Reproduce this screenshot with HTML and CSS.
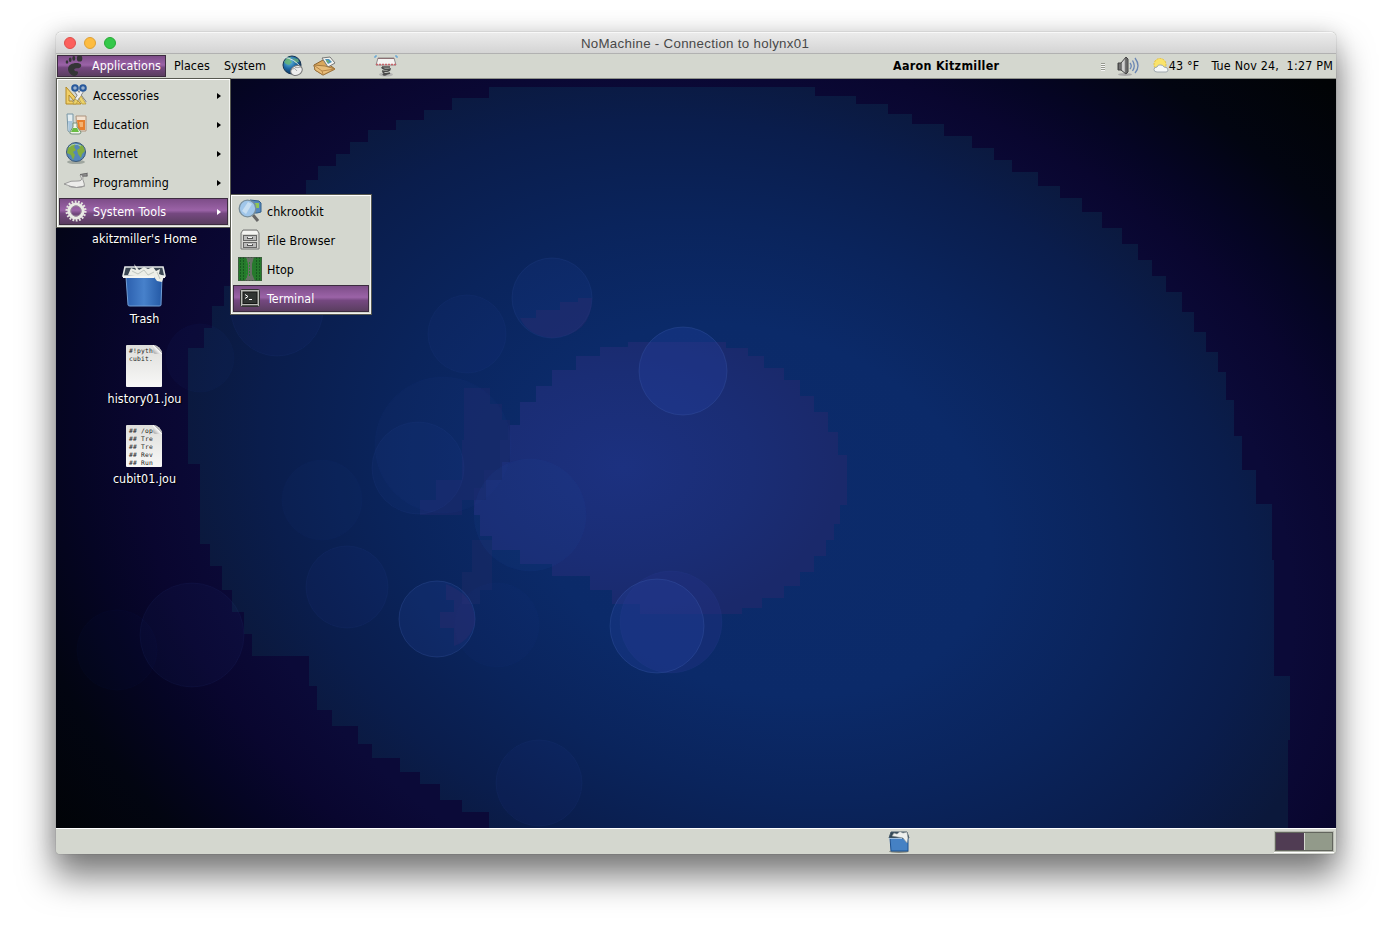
FILE: index.html
```html
<!DOCTYPE html>
<html lang="en">
<head>
<meta charset="utf-8">
<title>NoMachine - Connection to holynx01</title>
<link rel="stylesheet" href="styles.css">
</head>
<body>
<div class="window">
  <header class="titlebar">
    <div class="lights"><span class="light red"></span><span class="light yellow"></span><span class="light green"></span></div>
    <h1 class="title">NoMachine - Connection to holynx01</h1>
  </header>

  <nav class="panel">
    <div class="panel-left">
      <span class="menu-root active">
        <svg class="foot" width="18" height="22" viewBox="0 0 18 22"><g fill="#343536"><ellipse cx="2" cy="7" rx="1.300" ry="1.800"/><ellipse cx="5.200" cy="4.800" rx="1.400" ry="2.200"/><ellipse cx="8.800" cy="3.400" rx="1.500" ry="2.300"/><ellipse cx="14.600" cy="3.400" rx="2.700" ry="3.200"/><path d="M3 14C3 9 10 7 14.500 8.500C18 10 15.500 13.500 12.500 13.300C10 13 8.500 14 9.500 15.500C11 17 13 15.500 13 17.500C13 21 9 22 6.500 20C4 18 3 16 3 14Z"/></g></svg>
        <span>Applications</span>
      </span>
      <span class="menu-root">Places</span>
      <span class="menu-root">System</span>
      <svg class="launch globe" width="22" height="22" viewBox="0 0 22 22"><defs><radialGradient id="gl" cx=".35" cy=".3" r=".8"><stop offset="0" stop-color="#72c8e4"/><stop offset=".5" stop-color="#1c68a4"/><stop offset="1" stop-color="#0b2448"/></radialGradient></defs><circle cx="11" cy="10" r="9" fill="url(#gl)" stroke="#173452"/><path d="M3 7L6 3L10 2L9 5L11 7L8 10L5 9Z" fill="#67b36c" opacity=".8"/><path d="M12 3L17 4L18 7L14 8Z" fill="#69ad77" opacity=".8"/><path d="M1 2Q14 3 20 13" fill="none" stroke="#d3e3e0"/><ellipse cx="15.500" cy="15.500" rx="6" ry="4.700" transform="rotate(-28 15.500 15.500)" fill="#eee" stroke="#777"/><path d="M11 14Q14 12 16 16M14 12.500Q17 13 20 12" fill="none" stroke="#aaa"/></svg>
      <svg class="launch mail" width="24" height="22" viewBox="0 0 24 22"><path d="M1 10L10 5L22 14L10 20L2 15Z" fill="#d9a75c" stroke="#8d6430"/><path d="M9 3L17 2L22 8L15 12Z" fill="#f4f4f0" stroke="#777"/><path d="M12 4L16 4L19 7L15 9Z" fill="#4b92b8"/><path d="M13 6L15 5L16 8Z" fill="#78b757"/><path d="M1 10L12 11L22 14L10 20L2 15Z" fill="#e8bd79" stroke="#966d37" stroke-width=".8"/><path d="M2 11L9 16L22 14M9 16L10 19" fill="none" stroke="#b98647"/></svg>
      <svg class="launch spring" width="24" height="22" viewBox="0 0 24 22"><path d="M4 3H20L22 10H2Z" fill="#f6f4f3" stroke="#918889"/><path d="M2 9.500H22" stroke="#c8646a" stroke-width="1.500" stroke-dasharray="2 1"/><path d="M4 3.500H20" stroke="#8c7073"/><path d="M1 3V1H3M21 1H23V3" fill="none" stroke="#4f9cd7"/><ellipse cx="12" cy="19.500" rx="7" ry="2" fill="#aaa" opacity=".7"/><path d="M8 12H16M8 12Q8 15 16 14Q16 17 8 16M9 17Q10 20 16 18M13 19Q10 21 9 19" fill="none" stroke="#4b4b4b" stroke-width="1.700"/></svg>
    </div>
    <strong class="user">Aaron Kitzmiller</strong>
    <div class="panel-right">
      <span class="grip"><i></i><i></i><i></i><i></i></span>
      <svg class="volume" width="22" height="22" viewBox="0 0 22 22"><defs><linearGradient id="sp"><stop stop-color="#444"/><stop offset=".5" stop-color="#ddd"/><stop offset="1" stop-color="#666"/></linearGradient></defs><ellipse cx="8" cy="19.500" rx="7" ry="1.500" fill="#aaa"/><path d="M1 8H4L9 2L11 4V17L9 19L4 15H1Z" fill="url(#sp)" stroke="#444"/><path d="M4 8V15M9 3V18" stroke="#444"/><g fill="none" stroke="#6a86b4" stroke-width="1.300"><path d="M13 8Q15.500 11 13 14"/><path d="M15.500 5.500Q19 11 15.500 16"/><path d="M18 3Q24 11 18 18"/></g></svg>
      <svg class="weather" width="16" height="16" viewBox="0 0 16 16"><circle cx="7" cy="6.500" r="6" fill="#fae36b" stroke="#e8c137" stroke-dasharray="2 1"/><path d="M4 14Q1 14 1 11.500Q1 9 4 9Q5 6 8 7Q10 7 11 9Q15 9 15 12Q15 14 13 14Z" fill="#f6f8f8" stroke="#a0a9b0"/></svg>
      <span class="temp">43 °F</span>
      <span class="clock">Tue Nov 24,&nbsp; 1:27 PM</span>
    </div>
  </nav>

  <main class="desktop">
    <svg class="wallpaper" width="1280" height="749" viewBox="56 79 1280 749">
      <defs>
        <radialGradient id="night" gradientUnits="userSpaceOnUse" cx="0" cy="0" r="1.600" gradientTransform="translate(756 529) rotate(20) scale(576 423)">
          <stop offset=".6" stop-color="#0b0a38"/><stop offset=".69" stop-color="#09062f"/><stop offset=".76" stop-color="#050524"/><stop offset=".86" stop-color="#020511"/><stop offset="1" stop-color="#010305"/>
        </radialGradient>
        <radialGradient id="sky" gradientUnits="userSpaceOnUse" cx="0" cy="0" r="1.050" gradientTransform="translate(756 510) rotate(20) scale(576 423)">
          <stop offset="0" stop-color="#0c2b6b"/><stop offset=".4" stop-color="#0b2a69"/><stop offset=".62" stop-color="#0a245c"/><stop offset=".84" stop-color="#0a1d4c"/><stop offset="1" stop-color="#0b183b"/>
        </radialGradient>
        <radialGradient id="core" cx=".4" cy=".46" r=".58"><stop offset="0" stop-color="#1c3180"/><stop offset=".6" stop-color="#1a2d75"/><stop offset="1" stop-color="#1a296b"/></radialGradient>
      </defs>
      <rect x="56" y="79" width="1280" height="749" fill="url(#night)"/>
      <path d="M489 87H815V96H856V104H888V114H912V124H944V136H972V148H994V160H1012V172H1038V186H1060V198H1082V212H1102V228H1122V244H1138V260H1152V276H1166V292H1182V312H1194V332H1206V352H1218V372H1226V400H1234V436H1242V470H1256V504H1272V560H1274V676H1290V740H1288V828H489V812H462V800H440V784H420V772H400V758H372V744H358V726H332V710H317V686H309V656H252V634H244V612H232V590H222V566H210V544H200V464H188V348H204V328H212V306H224V286H236V264H248V246H260V228H276V210H292V194H306V180H318V166H336V154H350V142H368V130H396V120H424V110H452V98H489Z" fill="url(#sky)"/>
      <path d="M500 470V440H508V425H520V402H536V386H552V370H576V356H600V347H628V342H726V348H748V356H764V368H784V380H800V396H814V412H828V432H838V455H847V505H840V524H834V540H826V556H814V572H800V586H784V598H762V608H742V614H640V604H612V590H590V576H552V564H520V550H492V536H480V515H474V488H484V470Z" fill="url(#core)"/>
      <path d="M464 388H490V404H502V420H510V462H502V480H486V500H462V515H420V500H436V480H462V440H464Z" fill="#172868" opacity=".8"/>
      <path d="M472 540H492V590H480V604H462V572H472Z" fill="#1c2966" opacity=".5"/>
      <g fill="#2446a0" fill-opacity=".08" stroke="#4668b8" stroke-opacity=".07">
        <circle cx="277" cy="310" r="46"/><circle cx="200" cy="358" r="34" fill-opacity=".06" stroke-opacity=".03"/>
        <circle cx="552" cy="298" r="40" fill-opacity=".14" stroke-opacity=".13"/><circle cx="467" cy="334" r="39"/>
        <circle cx="683" cy="371" r="44" fill="#2443a6" fill-opacity=".3" stroke-opacity=".25"/>
        <circle cx="443" cy="445" r="68" fill-opacity=".07" stroke-opacity=".03"/><circle cx="418" cy="468" r="46" fill-opacity=".1"/>
        <circle cx="530" cy="515" r="56" fill-opacity=".12" stroke-opacity=".03"/>
        <circle cx="322" cy="500" r="40" fill-opacity=".06" stroke-opacity=".03"/><circle cx="347" cy="587" r="41"/>
        <circle cx="437" cy="619" r="38" fill-opacity=".2" stroke-opacity=".25"/><circle cx="497" cy="625" r="42" fill-opacity=".06" stroke-opacity=".03"/>
        <circle cx="671" cy="622" r="51" fill="#233184" fill-opacity=".4"/><circle cx="657" cy="626" r="47" fill="#2643a0" fill-opacity=".3" stroke-opacity=".25"/>
        <circle cx="192" cy="635" r="52" fill-opacity=".07"/><circle cx="117" cy="650" r="40" fill-opacity=".03" stroke-opacity=".03"/>
        <circle cx="539" cy="783" r="43"/>
      </g>
      <path d="M520 318H536V310H560V302H578V298H592Q592 335 552 338Q528 336 520 318ZM446 584Q476 596 475 623Q470 641 454 646V628H440V612H454V600H446Z" fill="#332b70" opacity=".35"/>
    </svg>

    <section class="files">
      <figure class="file home"><figcaption>akitzmiller's Home</figcaption></figure>
      <figure class="file">
        <svg width="48" height="48" viewBox="0 0 48 48"><defs><linearGradient id="bin"><stop stop-color="#2b5fae"/><stop offset=".5" stop-color="#4781cb"/><stop offset="1" stop-color="#2459a5"/></linearGradient></defs><path d="M6 15H42L41 43Q41 44 39 44H10Q8 44 8 43Z" fill="url(#bin)" stroke="#719ed5"/><path d="M5 5H43L45 14H3Z" fill="#3a4652" stroke="#e4e8e7" stroke-width="1.600"/><path d="M8 13L11 6L16 8L14 2L19 8L24 5L28 7L33 5L36 9L40 7L39 12L44 14L42 20L37 19L34 15H20L15 14Z" fill="#eceee7"/><path d="M12 9L18 12L24 8L28 13L34 10M37 10L40 17" fill="none" stroke="#bfc5be"/><path d="M3 15H34M43 15H45" stroke="#f4f5f2" stroke-width="2"/></svg>
        <figcaption>Trash</figcaption>
      </figure>
      <figure class="file">
        <div class="page"><pre>#!pyth
cubit.</pre><span class="fold"></span></div>
        <figcaption>history01.jou</figcaption>
      </figure>
      <figure class="file">
        <div class="page"><pre>## /op
## Tre
## Tre
## Rev
## Run</pre><span class="fold"></span></div>
        <figcaption>cubit01.jou</figcaption>
      </figure>
    </section>

    <ul class="menu main-menu">
      <li class="item"><svg width="24" height="24" viewBox="0 0 24 24"><path d="M2 4L17 21H2ZM5 12V18H10Z" fill="#f0cf68" fill-rule="evenodd" stroke="#b48a24"/><path d="M12 8L21 20M18 8L10 20" stroke="#777" stroke-width="4"/><path d="M12 8L21 20M18 8L10 20" stroke="#eee" stroke-width="2.500"/><path d="M17 13L22 21H18L15 16ZM11 16L14 18L12 21H9Z" fill="#ecd36c" stroke="#b19535" stroke-width=".7"/><circle cx="11" cy="5" r="2.800" fill="#9ab2cf" stroke="#28599b" stroke-width="2"/><circle cx="19" cy="5" r="2.800" fill="#9ab2cf" stroke="#28599b" stroke-width="2"/></svg><span>Accessories</span><b class="arrow"></b></li>
      <li class="item"><svg width="24" height="24" viewBox="0 0 24 24"><path d="M3 2H9V19Q6 22 4 19Z" fill="#e3edf0" stroke="#7896a5"/><path d="M4 9H8V19H5Z" fill="#a7c5dc"/><path d="M12 4H22V19H13Z" fill="#f3e3d2" stroke="#ac927d"/><path d="M13 8H21V18H14Z" fill="#e6802f"/><path d="M15 10H19V15H16Z" fill="#f5b271"/><path d="M9 11H13V15L17 20Q17 22 15 22H8Q5 22 6 20L9 15Z" fill="#eef3e9" stroke="#78917a"/><path d="M9 16H13L15 20H7Z" fill="#6abd42"/></svg><span>Education</span><b class="arrow"></b></li>
      <li class="item"><svg width="24" height="24" viewBox="0 0 24 24"><ellipse cx="12" cy="21" rx="9" ry="2" fill="#9fa69f"/><circle cx="12" cy="11" r="9.500" fill="#5486b9" stroke="#3b5875"/><path d="M4 7L8 3L12 3L10 6L12 9L9 11L11 14L9 19L7 14L3 12ZM14 3L19 5L21 10L18 13L17 17L14 13L13 9L16 7Z" fill="#83ad3e"/><path d="M5 6Q10 1 17 5" fill="none" stroke="#b8d8e8" opacity=".7"/></svg><span>Internet</span><b class="arrow"></b></li>
      <li class="item"><svg width="24" height="24" viewBox="0 0 24 24"><path d="M0 14Q7 10 14 11Q19 11 17 7L16 5L24 3V6H19Q18 9 20 13Q22 16 18 17Q13 18 7 17Q4 15 0 14Z" fill="#ececea" stroke="#888" stroke-width=".8"/><path d="M16 4.500L23 3.500V6H18" fill="#999" stroke="#666"/><path d="M5 16Q12 19 21 16" fill="none" stroke="#999"/></svg><span>Programming</span><b class="arrow"></b></li>
      <li class="item selected"><svg width="24" height="24" viewBox="0 0 24 24"><circle cx="12" cy="12" r="9.300" fill="none" stroke="#e4e4df" stroke-width="2.500" stroke-dasharray="1.800 1.450"/><circle cx="12" cy="12" r="7" fill="none" stroke="#e9e9e4" stroke-width="3.200"/><circle cx="12" cy="12" r="5.200" fill="none" stroke="#9a8a9c"/></svg><span>System Tools</span><b class="arrow"></b></li>
    </ul>

    <ul class="menu sub-menu">
      <li class="item"><svg width="24" height="24" viewBox="0 0 24 24"><path d="M12 1L21 2L23 4V13L19 14H12Z" fill="#5788bd" stroke="#34628c"/><path d="M17 4H21V9H18Z" fill="#8fc655"/><path d="M15 16L20 22" stroke="#666" stroke-width="3"/><circle cx="9.500" cy="9.500" r="8.300" fill="#a0c6ea" stroke="#778d9b" stroke-width="1.300"/><path d="M4 12L10 3L14 5L8 15Z" fill="#d7e8f5" opacity=".7"/></svg><span>chkrootkit</span></li>
      <li class="item"><svg width="24" height="24" viewBox="0 0 24 24"><path d="M5 2H19L21 5V21H3V5Z" fill="#d7d7d3" stroke="#777"/><path d="M5 3H19L20 6H4Z" fill="#f4f4f2"/><g fill="#bbb" stroke="#666"><rect x="5.500" y="7.500" width="13" height="5"/><rect x="5.500" y="14.500" width="13" height="5"/></g><path d="M9 10H15M9 17H15" stroke="#555" stroke-width="2"/><path d="M10 9.500H14M10 16.500H14" stroke="#f4f4f4"/></svg><span>File Browser</span></li>
      <li class="item"><svg width="24" height="24" viewBox="0 0 24 24"><rect width="24" height="24" fill="#267a2c"/><path d="M8 0H16L14 7V17L17 24H7L10 17V7Z" fill="#687066"/><path d="M2.500 0V24M5.500 0V24M18.500 0V24M21.500 0V24" stroke="#17591f" stroke-dasharray="2 1"/><path d="M11.500 5V19M8.500 2V21" stroke="#238c2b" stroke-dasharray="2 1"/><rect x=".5" y=".5" width="23" height="23" fill="none" stroke="#465447" stroke-dasharray="2 1"/></svg><span>Htop</span></li>
      <li class="item selected"><svg width="24" height="24" viewBox="0 0 24 24"><rect x="2.500" y="3.500" width="19" height="17" rx="1" fill="#b8bbb5" stroke="#343634"/><rect x="5" y="6" width="14" height="11.500" fill="#303532" stroke="#161816"/><path d="M7 8.500L10 10.500L7 12.500M11 13.500H14" fill="none" stroke="#fff"/><path d="M4 19.500H20" stroke="#555"/></svg><span>Terminal</span></li>
    </ul>
  </main>

  <footer class="taskbar">
    <svg class="task-trash" width="22" height="24" viewBox="0 0 22 24"><ellipse cx="11" cy="21.500" rx="10" ry="1.500" fill="#85887f"/><path d="M2 8H20V21H3Z" fill="#4581c4" stroke="#1d508f"/><path d="M3 2H19L21 8H1Z" fill="#334855" stroke="#465968"/><path d="M4 6L6 3L9 4L12 1.500L15 3L19 2L20 8L19 13L15 8Z" fill="#eef0ed" stroke="#8a9294" stroke-width=".6"/><path d="M1 8.500H14" stroke="#a2c0df"/></svg>
    <div class="pager"><span class="space current"></span><span class="space"></span></div>
  </footer>
</div>
</body>
</html>
```
FILE: styles.css
```css
* { box-sizing: border-box; }

body {
  margin: 0;
  height: 934px;
  padding: 32px 56px 0;
  overflow: hidden;
  background: #fff;
  font-family: "DejaVu Sans Condensed", "DejaVu Sans", sans-serif;
  font-stretch: condensed;
  font-size: 12.4px;
  letter-spacing: .07px;
  color: #000;
}

svg { display: block; flex: none; }

.window {
  width: 1280px;
  height: 822px;
  display: flex;
  flex-direction: column;
  border-radius: 5px 5px 4px 4px;
  background: #d4d7cf;
  box-shadow: 0 0 1px rgba(0, 0, 0, .5), 0 21px 34px 2px rgba(0, 0, 0, .5), 0 0 22px rgba(0, 0, 0, .12);
}

.titlebar {
  height: 22px;
  display: grid;
  grid-template-columns: 60px 1fr 62px;
  align-items: center;
  border-radius: 5px 5px 0 0;
  border-top: 1px solid #f8f8f8;
  border-bottom: 1px solid #b1b1b1;
  background: linear-gradient(#ebebeb, #d4d4d4);
}
.lights { display: flex; gap: 8px; padding-left: 8px; }
.light { width: 12px; height: 12px; border-radius: 50%; border: 1px solid; }
.red { background: #fc605c; border-color: #de4f4b; }
.yellow { background: #fdbc40; border-color: #dea035; }
.green { background: #34c84a; border-color: #27aa35; }
.title {
  margin: 0;
  padding-top: 2px;
  text-align: center;
  font: 400 13.3px/18px "Liberation Sans", Arial, sans-serif;
  letter-spacing: .3px;
  color: #484848;
}

.panel {
  height: 25px;
  display: grid;
  grid-template-columns: 837px 1fr auto;
  align-items: center;
  border-bottom: 1px solid #8e9189;
  background: #d4d7cf;
  white-space: pre;
}
.panel > *, .menu-root { line-height: 14px; }
.panel span:not(.grip), .user { padding-bottom: 1px; }
.panel-left { display: flex; align-items: center; height: 24px; }
.menu-root { display: flex; align-items: center; height: 22px; margin-left: 8px; }
.menu-root + .menu-root { margin-left: 14px; }
.panel .menu-root.active {
  width: 109px;
  margin-left: 1px;
  padding: 0 0 0 7px;
  gap: 9px;
  border: 1px solid #3c2c3f;
  color: #fff;
}
.menu-root.active + .menu-root { margin-left: 8px; }
.menu-root.active, .item.selected {
  background: linear-gradient(#7d4d88, #9b63a7 45%, #754880 58%, #5a3e60);
}
.globe { margin-left: 15px; }
.mail { margin-left: 10px; }
.spring { margin-left: 37px; }
.user { font-weight: 700; letter-spacing: .3px; }
.panel-right { display: flex; align-items: center; padding-right: 3px; }
.grip { display: grid; gap: 1px; margin-right: 12px; }
.grip i { width: 4px; height: 1px; background: #96998f; box-shadow: 0 1px #f5f5f5; }
.volume { margin-right: 14px; }
.temp { letter-spacing: .18px; }
.clock { margin-left: 12px; letter-spacing: .21px; }

.desktop {
  height: 749px;
  position: relative;
  background: #0a183e;
}
.wallpaper { position: absolute; inset: 0; }

.files {
  position: relative;
  width: 177px;
  padding-top: 103px;
  display: flex;
  flex-direction: column;
}
.file {
  height: 80px;
  margin: 0;
  display: flex;
  flex-direction: column;
  align-items: center;
  color: #fff;
  text-shadow: 1px 1px 1px #000;
}
.file svg, .page { margin-right: 1px; }
.file.home { justify-content: flex-end; padding-bottom: 15px; }
.file figcaption { line-height: 16px; }
.file:not(.home) figcaption { padding-top: 1px; }
.page {
  position: relative;
  width: 36px;
  height: 42px;
  margin: 3px 1px 3px 0;
  padding: 2px 0 0 3px;
  overflow: hidden;
  border-radius: 1px 9px 1px 1px;
  background: linear-gradient(#dededb, #f8f8f7);
  text-shadow: none;
}
.page pre {
  margin: 0;
  font: 6.3px/8px "DejaVu Sans Mono", monospace;
  letter-spacing: .2px;
  color: #222;
}
.fold {
  position: absolute;
  top: 0;
  right: 0;
  width: 9px;
  height: 9px;
  background: linear-gradient(45deg, #999 0, #f8f8f8 50%, #bbb 52%);
  border-bottom-left-radius: 3px;
}

.menu {
  position: absolute;
  margin: 0;
  padding: 1px 2px 1px 3px;
  list-style: none;
  background: #d4d7cf;
  border: 1px solid #565850;
  box-shadow: inset 1px 1px #fff, inset -1px -1px #f1f2ee;
}
.main-menu { left: 0; top: -1px; width: 175px; height: 150px; padding: 3px 2px 1px; }
.sub-menu { left: 174px; top: 115px; width: 142px; height: 121px; padding: 3px 2px 1px; }
.item {
  height: 27px;
  margin-bottom: 2px;
  padding: 0 6px 0 4px;
  display: flex;
  align-items: center;
  gap: 5px;
  border: 1px solid transparent;
}
.item svg { margin-top: -1px; }
.item.selected { color: #fff; border-color: #3c2c3f; }
.arrow {
  margin-left: auto;
  border: 3px solid transparent;
  border-left: 4px solid currentColor;
  border-right: 0;
}

.taskbar {
  height: 26px;
  display: flex;
  justify-content: flex-end;
  align-items: center;
  border-top: 1px solid #fff;
  border-radius: 0 0 4px 4px;
  background: #d4d7cf;
}
.task-trash { margin-right: 364px; }
.pager {
  width: 60px;
  height: 21px;
  margin-right: 2px;
  display: grid;
  grid-template-columns: 1fr 1fr;
  gap: 1px;
  border: 2px solid #62655d;
  outline: 1px solid #b8bbb2;
  outline-offset: -1px;
  background: #d4d7cf;
  box-shadow: 0 1px #fff;
}
.space { background: #929a8a; }
.space.current { background: #503c53; }
```
